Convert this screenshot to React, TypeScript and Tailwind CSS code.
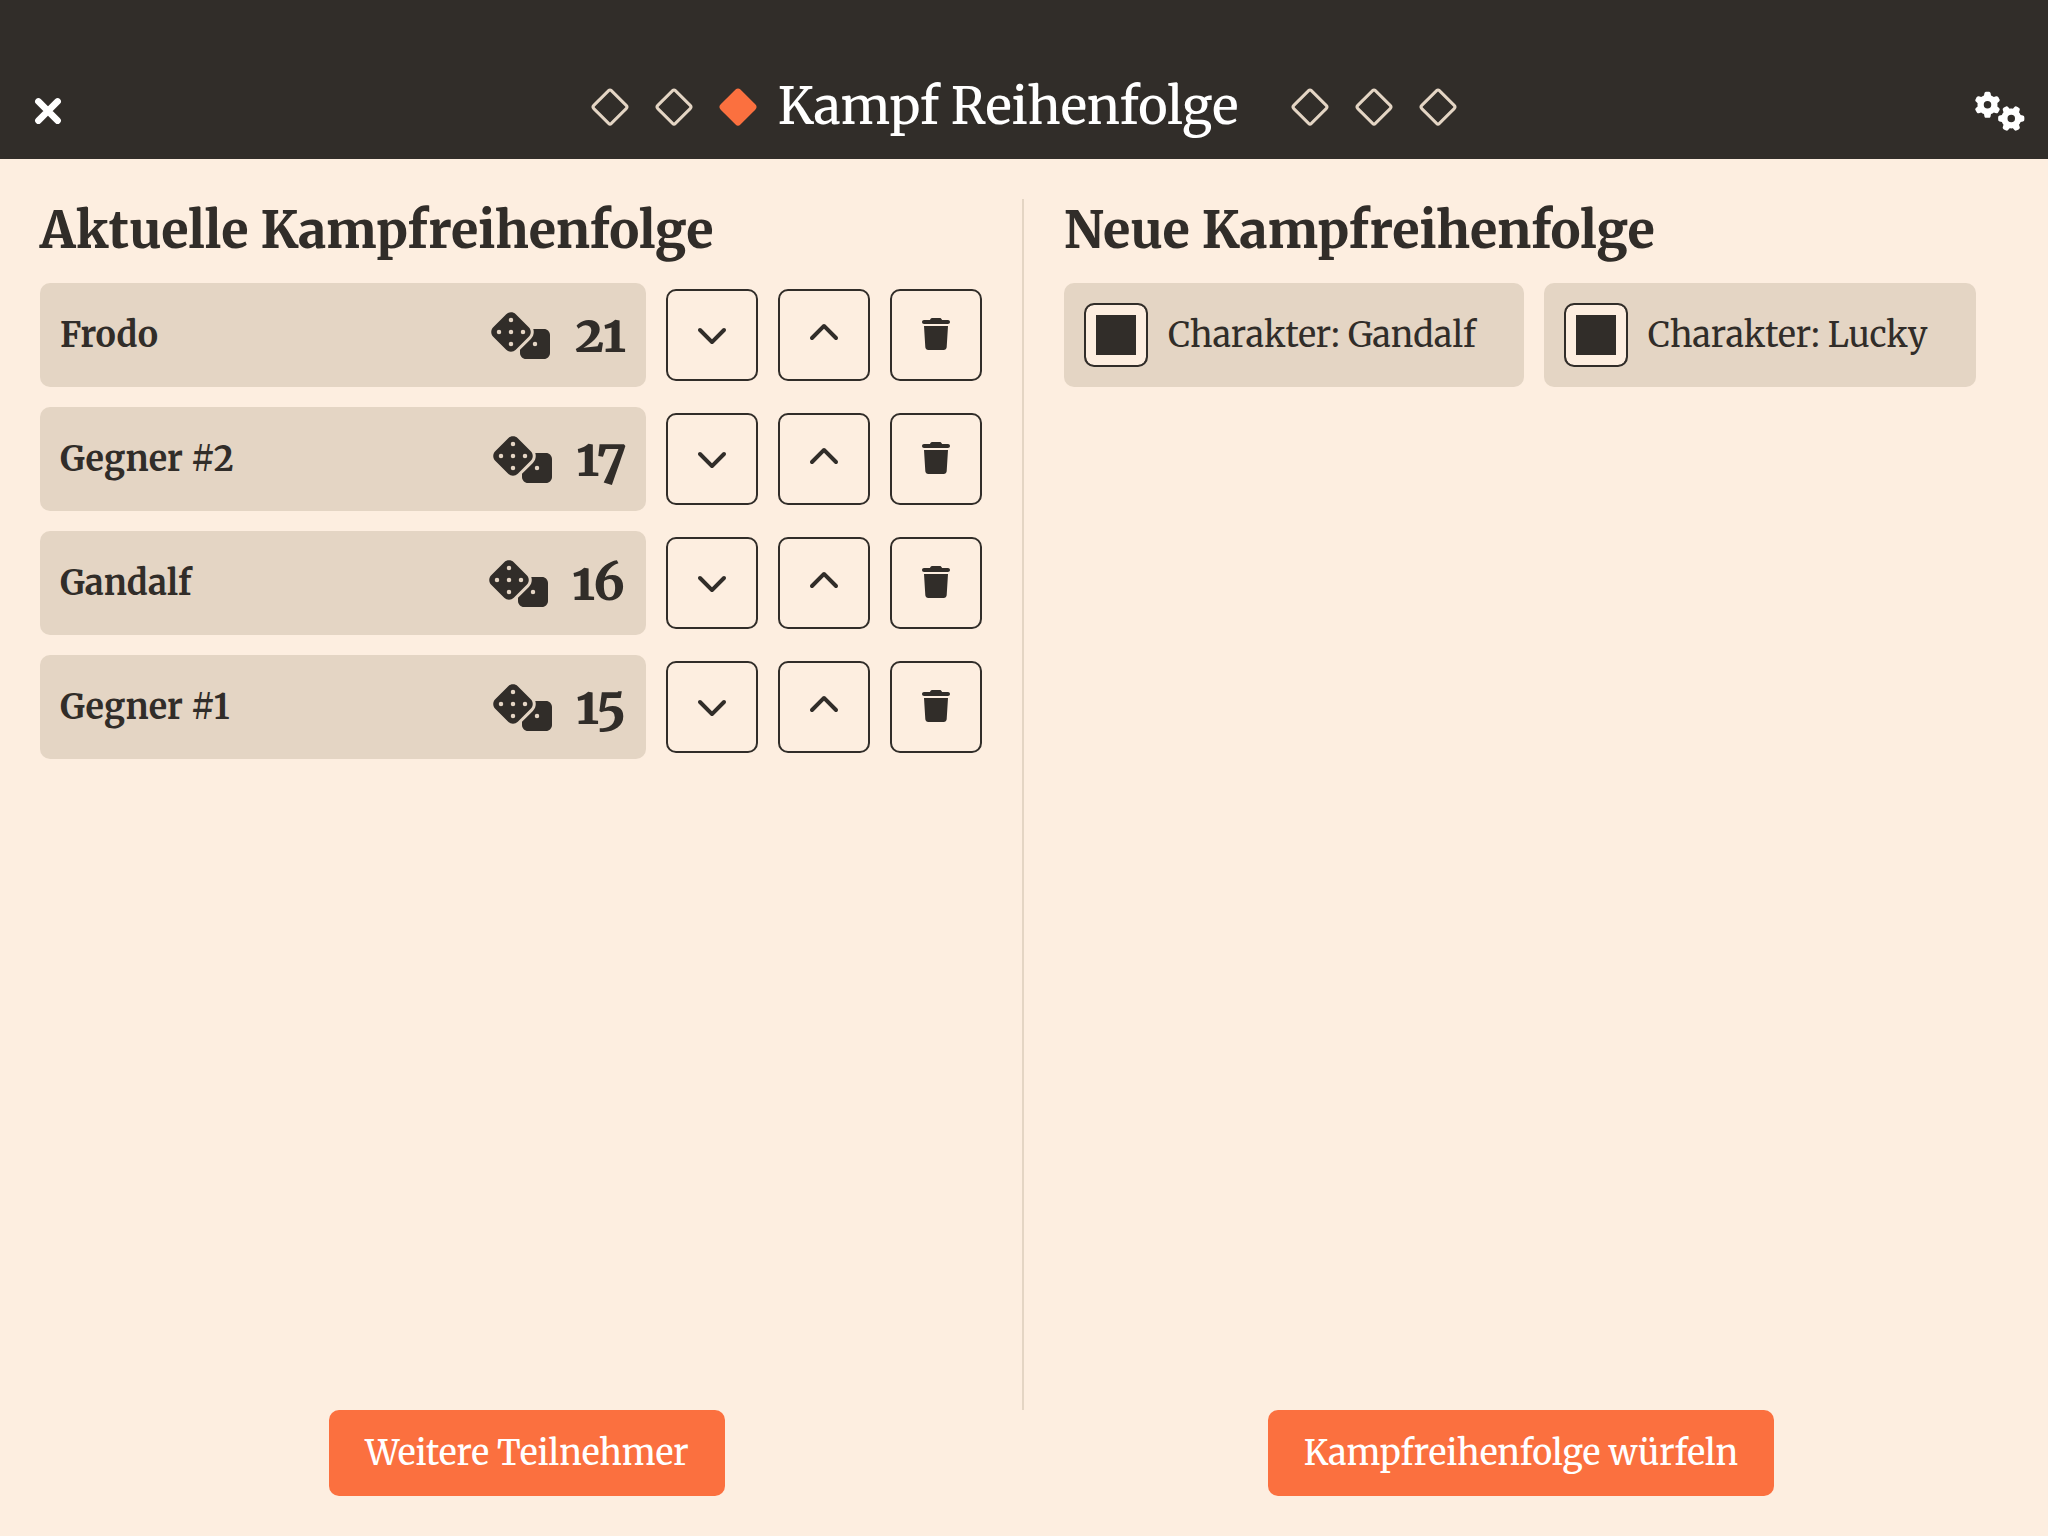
import { FaChevronDown, FaChevronUp, FaDice, FaGears, FaTrash } from 'react-icons/fa6';

type Participant = { name: string; roll: number };

const participants: Participant[] = [
  { name: 'Frodo', roll: 21 },
  { name: 'Gegner #2', roll: 17 },
  { name: 'Gandalf', roll: 16 },
  { name: 'Gegner #1', roll: 15 },
];

const characters = ['Gandalf', 'Lucky'];

function Diamond({ filled = false }: { filled?: boolean }) {
  return (
    <svg viewBox="0 0 40 40" className="size-10" aria-hidden="true">
      <path
        d="M18.6 3.6 Q20 2.2 21.4 3.6 L36.2 18.4 Q37.8 20 36.2 21.6 L21.4 36.4 Q20 37.8 18.6 36.4 L3.8 21.6 Q2.2 20 3.8 18.4 Z"
        fill={filled ? '#fb703f' : 'none'}
        stroke={filled ? '#fb703f' : '#e4d5c4'}
        strokeWidth="3"
        strokeLinejoin="round"
      />
    </svg>
  );
}

function CloseIcon() {
  return (
    <svg viewBox="0 0 28 28" className="size-7" fill="none" stroke="currentColor" strokeWidth="6.6" strokeLinecap="round" aria-hidden="true">
      <path d="M4.4 4.4 L23.6 23.6 M23.6 4.4 L4.4 23.6" />
    </svg>
  );
}

function Header() {
  return (
    <header className="flex h-[159px] items-end justify-between bg-[#312d29] px-6 pb-6 text-white">
      <button type="button" aria-label="Schließen" className="flex size-12 items-center justify-center">
        <CloseIcon />
      </button>
      <div className="flex items-center gap-6">
        <Diamond />
        <Diamond />
        <Diamond filled />
        <h1 className="-ml-1 mr-7 text-[50px]/[56px] font-medium">Kampf Reihenfolge</h1>
        <Diamond />
        <Diamond />
        <Diamond />
      </div>
      <button type="button" aria-label="Einstellungen" className="flex size-12 items-center justify-center">
        <FaGears className="h-10 w-[50px] shrink-0" />
      </button>
    </header>
  );
}

const iconButton =
  'flex size-[92px] shrink-0 items-center justify-center rounded-[10px] border-2 border-[#312d29] pb-0.5';
const actionButton = 'h-[86px] rounded-[10px] bg-[#fb703f] px-9 text-[34px] font-medium text-white';

function ParticipantRow({ name, roll }: Participant) {
  return (
    <li className="flex items-center gap-5">
      <div className="flex h-26 flex-1 items-center gap-6 rounded-[10px] bg-[#e4d5c4] px-5">
        <span className="flex-1 text-[34px] font-bold">{name}</span>
        <FaDice className="h-12 w-15" />
        <span className="text-[50px]/[60px] font-extrabold oldstyle-nums">{roll}</span>
      </div>
      <button type="button" aria-label={`${name} nach unten`} className={iconButton}>
        <FaChevronDown className="size-8" />
      </button>
      <button type="button" aria-label={`${name} nach oben`} className={iconButton}>
        <FaChevronUp className="size-8" />
      </button>
      <button type="button" aria-label={`${name} entfernen`} className={iconButton}>
        <FaTrash className="size-8" />
      </button>
    </li>
  );
}

function CharacterOption({ name }: { name: string }) {
  return (
    <label className="flex h-26 items-center gap-5 rounded-[10px] bg-[#e4d5c4] pl-5 pr-12 text-[34px]">
      <input
        type="checkbox"
        defaultChecked
        className="size-16 shrink-0 appearance-none rounded-[10px] border-2 border-[#312d29] bg-[#fdeee0] shadow-[inset_0_0_0_10px_#fdeee0] checked:bg-[#312d29]"
      />
      <span>Charakter: {name}</span>
    </label>
  );
}

export default function App() {
  return (
    <div className="flex min-h-screen flex-col bg-[#fdeee0] font-['Merriweather','DejaVu_Serif_Condensed','DejaVu_Serif',serif] text-[#312d29]">
      <Header />
      <main className="grid flex-1 grid-cols-2 pt-10">
        <section className="border-r-2 border-[#e4d5c4] pl-10 pr-10">
          <h2 className="pb-5 text-[50px]/[64px] font-extrabold">Aktuelle Kampfreihenfolge</h2>
          <ul className="flex flex-col gap-5">
            {participants.map((p) => (
              <ParticipantRow key={p.name} {...p} />
            ))}
          </ul>
        </section>
        <section className="px-10">
          <h2 className="pb-5 text-[50px]/[64px] font-extrabold">Neue Kampfreihenfolge</h2>
          <div className="flex flex-wrap gap-5">
            {characters.map((name) => (
              <CharacterOption key={name} name={name} />
            ))}
          </div>
        </section>
      </main>
      <footer className="grid grid-cols-2 justify-items-center px-[30px] pb-10">
        <button type="button" className={actionButton}>Weitere Teilnehmer</button>
        <button type="button" className={actionButton}>Kampfreihenfolge würfeln</button>
      </footer>
    </div>
  );
}
